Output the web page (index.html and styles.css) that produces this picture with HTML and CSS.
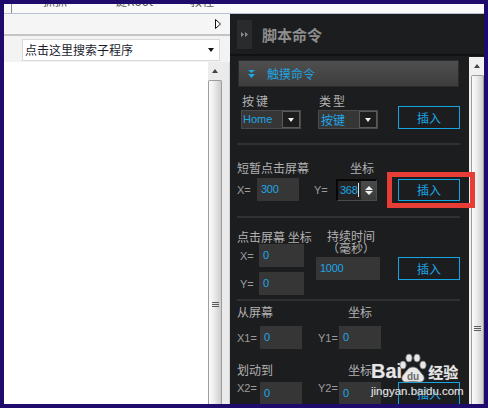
FILE: index.html
```html
<!DOCTYPE html>
<html>
<head>
<meta charset="utf-8">
<link rel="stylesheet" href="styles.css">
</head>
<body>
<div class="window">
  <div class="menubar">
    <span class="menu-sep"></span>
    <span class="menu-item m1">抓抓</span>
    <span class="menu-item m2">一键Root</span>
    <span class="menu-item m3">教程</span>
  </div>
  <div class="main">
    <div class="left">
      <div class="toolbar">
        <svg class="tb-arrow" width="6" height="10" viewBox="0 0 6 10"><path d="M0.5 0.5 L5.5 5 L0.5 9.5 Z" fill="#fff" stroke="#111" stroke-width="1"/></svg>
      </div>
      <div class="search-row">
        <div class="combo">
          <span class="combo-text">点击这里搜索子程序</span>
          <span class="tri-down-dark"></span>
        </div>
      </div>
      <div class="list-row">
        <div class="list"></div>
        <div class="vscroll">
          <div class="vs-up"><span class="tri-up"></span></div>
          <div class="vs-thumb lthumb"><span class="grip"></span></div>
        </div>
        <div class="filler"></div>
      </div>
    </div>
    <div class="right">
      <div class="panel-head">
        <div class="toggle">
          <svg width="7" height="5" viewBox="0 0 7 5"><path d="M0 0 L3 2.5 L0 5 Z M4 0 L7 2.5 L4 5 Z" fill="#8c8c8c"/></svg>
        </div>
        <div class="panel-title">脚本命令</div>
      </div>
      <div class="panel-body">
        <div class="content">
          <div class="collapse">
            <svg class="chev" width="7" height="8" viewBox="0 0 7 8"><path d="M0 0 L7 0 L3.5 3 Z M0 4 L7 4 L3.5 8 Z" fill="#1fa6e4"/></svg>
            <span class="collapse-title">触摸命令</span>
          </div>

          <div class="sec1">
            <div class="col">
              <span class="lbl spaced">按键</span>
              <div class="select"><span class="select-val">Home</span><span class="select-drop"><span class="tri-down"></span></span></div>
            </div>
            <div class="col col2">
              <span class="lbl spaced">类型</span>
              <div class="select"><span class="select-val cjk">按键</span><span class="select-drop"><span class="tri-down"></span></span></div>
            </div>
            <div class="btn b1">插入</div>
          </div>

          <div class="sep"></div>

          <div class="sec2">
            <div class="lblrow"><span class="lbl w113">短暂点击屏幕</span><span class="lbl">坐标</span></div>
            <div class="row r2">
              <span class="xl w20">X=</span>
              <span class="inp w42">300</span>
              <span class="xl yl">Y=</span>
              <div class="spin">
                <span class="spin-val">368</span><span class="caret"></span>
                <span class="spin-btns"><span class="tri-up light"></span><span class="tri-down light"></span></span>
              </div>
              <div class="btn b2 marked">插入</div>
            </div>
          </div>

          <div class="sep s2"></div>

          <div class="sec3">
            <div class="colA">
              <div class="lbl lh14">点击屏幕 坐标</div>
              <div class="row"><span class="xl w22 pl3">X=</span><span class="inp w45">0</span></div>
              <div class="row ry"><span class="xl w22 pl3">Y=</span><span class="inp w45">0</span></div>
            </div>
            <div class="colB">
              <div class="lbl lh12 dur">持续时间<br>（毫秒）</div>
              <span class="inp w64 dinp">1000</span>
            </div>
            <div class="btn b3">插入</div>
          </div>

          <div class="sep s3"></div>

          <div class="sec4">
            <div class="lblrow"><span class="lbl w111">从屏幕</span><span class="lbl">坐标</span></div>
            <div class="row r41">
              <span class="xl w23">X1=</span><span class="inp w42">0</span>
              <span class="xl y1">Y1=</span><span class="inp w42">0</span>
            </div>
            <div class="lblrow l42"><span class="lbl w111">划动到</span><span class="lbl">坐标</span></div>
            <div class="row r42">
              <span class="xl w23">X2=</span><span class="inp w42">0</span>
              <span class="xl y1">Y2=</span><span class="inp w42">0</span>
              <div class="btn b4">插入</div>
            </div>
          </div>
        </div>
        <div class="vscroll dscroll">
          <div class="vs-up dup"><span class="tri-up"></span></div>
          <div class="vs-thumb rthumb"><span class="grip"></span></div>
        </div>
      </div>
    </div>
  </div>
</div>
<div class="watermark">
  <div class="wm-top">
    <span class="wm-bai">Bai</span>
    <svg class="wm-paw" width="30" height="30" viewBox="0 0 30 30">
      <g fill="#e8e8e8" stroke="#6a6a6a" stroke-width="0.8">
        <ellipse cx="5" cy="12" rx="3.2" ry="4"/>
        <ellipse cx="11" cy="5" rx="3.2" ry="4"/>
        <ellipse cx="19" cy="5" rx="3.2" ry="4"/>
        <ellipse cx="25" cy="12" rx="3.2" ry="4"/>
        <path d="M15 14 C10 14 8 19 5 22 C2 26 5 30 10 29 C13 28.5 17 28.5 20 29 C25 30 28 26 25 22 C22 19 20 14 15 14 Z"/>
      </g>
      <text x="15" y="27" text-anchor="middle" font-family="Liberation Sans, sans-serif" font-weight="bold" font-size="10" fill="#6a6a6a">du</text>
    </svg>
    <span class="wm-jy">经验</span>
  </div>
  <div class="wm-url">jingyan.baidu.com</div>
</div>
</body>
</html>
```

FILE: styles.css
```css
* { box-sizing: border-box; margin: 0; padding: 0; }
html, body { width: 488px; height: 408px; overflow: hidden; }
body {
  background: #1e0b6c;
  padding: 4px;
  position: relative;
  font-family: "Noto Sans CJK SC", "Noto Sans", sans-serif;
  font-size: 12px;
}
.window {
  width: 480px; height: 400px;
  display: flex; flex-direction: column;
  overflow: hidden;
  background: #f0f0f0;
}
/* menubar (clipped) */
.menubar {
  height: 10px; flex: none;
  background: #f9f9f9;
  border-bottom: 1px solid #b6c0d2;
  display: flex; overflow: hidden;
}
.menu-sep { width: 1px; height: 9px; background: #8a8a8a; margin-left: 7px; flex: none; }
.menu-item { flex: none; font-size: 12px; line-height: 14px; color: #555; margin-top: -10px; white-space: nowrap; }
.m1 { margin-left: 31px; width: 60px; }
.m2 { width: 87px; }

.main { flex: 1; display: flex; min-height: 0; }

/* left pane */
.left { width: 226px; flex: none; display: flex; flex-direction: column; background: #f0f0f0; }
.toolbar {
  height: 22px; flex: none;
  background: #f5f5f5;
  border-bottom: 2px solid #c4c4c4;
  display: flex; justify-content: flex-end; align-items: center;
  padding-right: 9px;
}
.search-row { height: 26px; flex: none; padding: 3px 0 0 18px; background: #f3f3f3; }
.combo {
  width: 198px; height: 22px;
  background: #fff; border: 1px solid #d9d9d9;
  display: flex; align-items: center; justify-content: space-between;
  padding: 0 5px 0 2px;
}
.combo-text { font-size: 12px; color: #1c1c2c; line-height: 14px; }
.tri-down-dark { width: 0; height: 0; border-left: 3px solid transparent; border-right: 3px solid transparent; border-top: 4px solid #111; }
.list-row { flex: 1; display: flex; min-height: 0; }
.list { width: 204px; flex: none; background: #fff; }
.vscroll { width: 14px; flex: none; display: flex; flex-direction: column; background: #ececec; }
.vs-up { height: 18px; flex: none; display: flex; align-items: center; justify-content: center; }
.tri-up { width: 0; height: 0; border-left: 3px solid transparent; border-right: 3px solid transparent; border-bottom: 4px solid #444; }
.vs-thumb {
  flex: 1;
  border: 1px solid #9c9c9c; border-bottom: none;
  border-radius: 2px 2px 0 0;
  background: linear-gradient(to right, #fbfbfb, #ededed 40%, #cdcdcd);
}
.lthumb { padding-top: 221px; }
.grip {
  display: block; width: 7px; height: 5px; margin: 0 auto;
  border-top: 1px solid #5a5a5a; border-bottom: 1px solid #5a5a5a;
  background: linear-gradient(#5a5a5a, #5a5a5a) center / 100% 1px no-repeat;
}
.filler { width: 8px; flex: none; background: #ebebeb; border-right: 1px solid #d2d2d2; }

/* right pane */
.right { flex: 1; background: #1c1d1f; display: flex; flex-direction: column; min-width: 0; }
.panel-head {
  height: 42px; flex: none;
  display: flex; align-items: flex-start;
  padding: 6px 0 0 7px;
  border-bottom: 2px solid #111214;
}
.toggle { width: 15px; height: 29px; background: #2a2b2d; display: flex; align-items: center; justify-content: center; }
.panel-title { margin-left: 10px; font-size: 15px; font-weight: bold; line-height: 29px; color: #8e8e8e; }
.panel-body { flex: 1; display: flex; min-height: 0; }
.content { width: 239px; flex: none; padding: 4px 9px 0 7px; }
.dscroll { width: 15px; margin-top: 1px; background: #f0f0f0; }
.dup { height: 18px; }
.rthumb { margin-left: 2px; padding-top: 250px; }

.collapse {
  height: 27px; width: 221px; margin-left: 1px;
  border: 1px solid #2c2c2c;
  background: linear-gradient(#4f4f4f, #3d3d3d);
  display: flex; align-items: center;
  padding-left: 9px;
}
.collapse-title { margin-left: 12px; color: #1fa3e0; font-size: 12px; line-height: 14px; }

.lbl { color: #b2b2b2; font-size: 12px; line-height: 16px; white-space: nowrap; }
.spaced { letter-spacing: 2px; }

.sec1 { display: flex; align-items: flex-end; margin-top: 6px; padding-left: 4px; }
.col { display: flex; flex-direction: column; width: 60px; flex: none; }
.col .lbl { padding-left: 1px; }
.col2 { margin-left: 17px; }
.select { width: 60px; height: 19px; margin-top: 1px; display: flex; background: #363636; border: 1px solid #4a4a4a; }
.select-val { flex: 1; color: #1ea6e6; font-family: "Liberation Sans", sans-serif; font-size: 11px; line-height: 17px; padding-left: 1px; }
.select-val.cjk { font-family: "Noto Sans CJK SC", sans-serif; font-size: 12px; padding-left: 2px; }
.select-drop { width: 18px; flex: none; background: #1d1d1d; border: 1px solid #5a5a5a; display: flex; align-items: center; justify-content: center; }
.tri-down { width: 0; height: 0; border-left: 3px solid transparent; border-right: 3px solid transparent; border-top: 4px solid #eee; }
.tri-up.light { border-bottom-color: #eee; border-left-width: 4px; border-right-width: 4px; }
.spin-btns .tri-down { border-top-color: #eee; border-left-width: 4px; border-right-width: 4px; margin-top: 1px; }

.btn {
  width: 62px; height: 23px; flex: none;
  border: 1px solid #17a4e4; color: #1ea6e6;
  display: flex; align-items: center; justify-content: center;
  font-size: 12px;
}
.b1 { margin-left: 20px; }

.sep { height: 2px; width: 223px; background: #303133; margin-top: 14px; }
.s2 { margin-top: 15px; }
.s3 { margin-top: 4px; }

.sec2 { margin-top: 16px; }
.lblrow { display: flex; height: 14px; }
.lblrow .lbl { line-height: 14px; }
.w113 { width: 113px; }
.w111 { width: 111px; }
.row { display: flex; align-items: center; }
.r2 { margin-top: 3px; height: 23px; }
.xl { color: #9c9c9c; font-family: "Liberation Sans", sans-serif; font-size: 11px; flex: none; }
.w20 { width: 20px; }
.w22 { width: 22px; }
.w23 { width: 23px; }
.pl3 { padding-left: 3px; }
.inp {
  height: 23px; flex: none;
  background: #363636; color: #1ea6e6;
  font-family: "Liberation Sans", sans-serif; font-size: 11px; line-height: 23px;
  padding-left: 4px; letter-spacing: -0.3px;
}
.w42 { width: 42px; }
.w45 { width: 45px; }
.w64 { width: 64px; }
.yl { margin-left: 15px; width: 22px; }
.spin {
  width: 41px; height: 22px; flex: none;
  display: flex; align-items: center;
  background: #232323;
  border-top: 2px solid #070707; border-left: 2px solid #070707;
  border-right: 1px solid #4a4a4a; border-bottom: 1px solid #4a4a4a;
  padding-left: 2px;
}
.spin-val { color: #1ea6e6; font-family: "Liberation Sans", sans-serif; font-size: 11px; letter-spacing: -0.3px; }
.caret { width: 1px; height: 14px; background: #e0e0e0; margin-left: 1px; }
.spin-btns {
  margin-left: auto; width: 15px; height: 100%;
  background: linear-gradient(#4a4a4a, #3a3a3a);
  display: flex; flex-direction: column; align-items: center; justify-content: center;
}
.b2 { margin-left: 21px; height: 22px; position: relative; }
.marked::after {
  content: ""; position: absolute;
  left: -12px; right: -16px; top: -8px; bottom: -8px;
  border: 5px solid #e63d36;
}

.sec3 { display: flex; align-items: flex-start; margin-top: 12px; }
.colA { width: 79px; flex: none; }
.lh14 { line-height: 14px; }
.ry { margin-top: 5px; }
.colB { width: 64px; flex: none; display: flex; flex-direction: column; }
.lh12 { line-height: 12px; }
.dur { padding-left: 11px; }
.dinp { margin-top: 3px; }
.b3 { margin-left: 18px; margin-top: 27px; }

.sec4 { margin-top: 4px; }
.r41 { margin-top: 7px; }
.y1 { margin-left: 16px; width: 21px; }
.l42 { margin-top: 14px; }
.r42 { margin-top: 5px; align-items: flex-start; }
.b4 { margin-left: 17px; }

/* watermark overlay */
.watermark { position: absolute; left: 371px; top: 352px; color: #e6e6e6; }
.wm-top { display: flex; align-items: flex-end; height: 31px; }
.wm-bai {
  font-family: "Liberation Sans", sans-serif; font-weight: bold; font-size: 20px; line-height: 20px;
  text-shadow: 0 0 1px #555, 0 0 1px #555;
  margin-bottom: 2px;
}
.wm-paw { margin-left: -4px; }
.wm-jy {
  font-family: "Noto Sans CJK SC", sans-serif; font-weight: bold; font-size: 15px; line-height: 18px;
  text-shadow: 0 0 1px #555, 0 0 1px #555;
  margin-bottom: 2px;
}
.wm-url {
  font-family: "Liberation Sans", sans-serif; font-size: 11.5px; line-height: 12px;
  margin-top: 2px;
  text-shadow: 0 0 1px #444, 0 0 1px #444;
}
```
